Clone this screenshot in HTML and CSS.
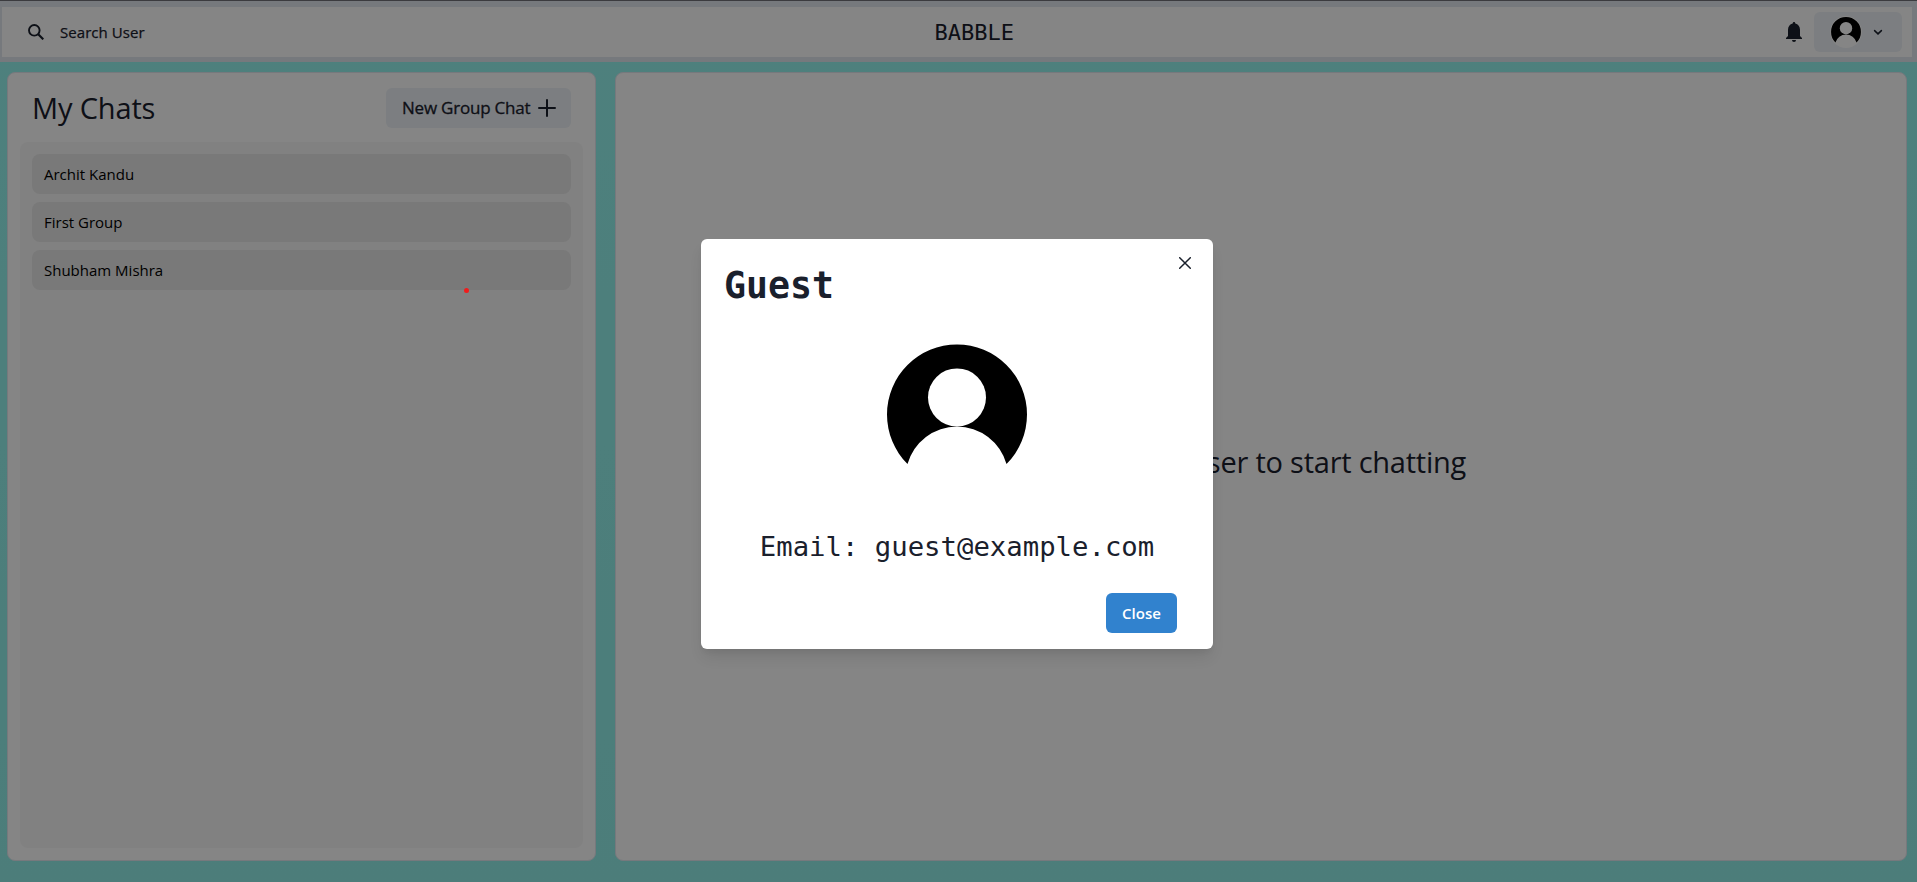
FILE: index.html
```html
<!DOCTYPE html>
<html lang="en">
<head>
<meta charset="utf-8">
<title>Babble</title>
<link rel="stylesheet" href="styles.css">
</head>
<body>
<svg width="0" height="0" class="defs" aria-hidden="true">
  <symbol id="avatar" viewBox="0 0 150 150">
    <rect width="150" height="150" fill="#fff"/>
    <path fill="#000" d="M25.5 124A70 70 0 1 1 124.5 124A51.4 51.4 0 0 0 25.5 124Z"/>
    <circle cx="75" cy="57.4" r="29" fill="#fff"/>
  </symbol>
</svg>
<div class="app">
  <header class="header">
    <button class="search">
      <svg width="16" height="16" viewBox="0 0 16 16" fill="none" stroke="currentColor" stroke-width="1.9"><circle cx="6.3" cy="6.3" r="5.3"/><path d="M10.2 10.2L15.3 15.3" stroke-width="2.2"/></svg>
      <span>Search User</span>
    </button>
    <h1 class="brand">BABBLE</h1>
    <div class="actions">
      <svg class="bell" width="16" height="20" viewBox="0 0 16 20" fill="currentColor"><path d="M8 0C7.1 0 6.7.6 6.7 1.5C3.8 2.2 2 4.6 2 7.7V14L0 16V17H16V16L14 14V7.7C14 4.6 12.200 2.200 9.300 1.500C9.300.6 8.900 0 8 0ZM6 18A2 2 0 0 0 10 18Z"/></svg>
      <button class="profile">
        <svg class="profile-pic" width="32" height="32"><use href="#avatar"/></svg>
        <svg width="16" height="16" viewBox="0 0 16 16" fill="none" stroke="currentColor" stroke-width="1.5" stroke-linecap="round"><path d="M4.600 6.600L8 9.900L11.400 6.600"/></svg>
      </button>
    </div>
  </header>
  <main class="main">
    <section class="panel chats">
      <div class="chats-head">
        <h2 class="chats-title">My Chats</h2>
        <button class="new-group"><span>New Group Chat</span>
          <svg width="18" height="18" viewBox="0 0 18 18" fill="none" stroke="currentColor" stroke-width="2" stroke-linecap="round"><path d="M9 1V17M1 9H17"/></svg>
        </button>
      </div>
      <div class="chat-list">
        <div class="chat"><span>Archit Kandu</span></div>
        <div class="chat"><span>First Group</span></div>
        <div class="chat"><span>Shubham Mishra</span></div>
      </div>
    </section>
    <section class="panel room"><p class="hint">Click on a user to start chatting</p></section>
  </main>
</div>
<div class="overlay">
  <span class="marker"></span>
  <div class="modal" role="dialog">
    <button class="dismiss" aria-label="Close"><svg width="12" height="12" viewBox="0 0 12 12" fill="none" stroke="currentColor" stroke-width="1.500" stroke-linecap="round"><path d="M.7.7L11.300 11.300M11.300.7L.7 11.300"/></svg></button>
    <h2 class="modal-title">Guest</h2>
    <div class="modal-body">
      <svg width="150" height="150"><use href="#avatar"/></svg>
      <p class="email">Email: guest@example.com</p>
    </div>
    <div class="modal-foot"><button class="close"><span>Close</span></button></div>
  </div>
</div>
</body>
</html>
```
FILE: styles.css
```css
* { box-sizing: border-box; margin: 0; padding: 0; }
html, body { height: 100%; overflow: hidden; }
body { font-family: "Open Sans", "Noto Sans", sans-serif; font-size: 16px; color: #1a202c; }
button { border: 0; background: none; font: inherit; color: inherit; }
h1, h2 { font-weight: 400; }
span { white-space: nowrap; }
svg { display: block; flex: none; }
.defs { position: absolute; }

.app { height: 882px; display: flex; flex-direction: column; background: linear-gradient(#96f6f0, #92f0ea); border-top: 1px solid #72727a; }
.header { height: 61px; flex: none; display: flex; justify-content: space-between; align-items: center; background: #fff; border: 5px solid #e2e8f0; border-left-width: 2px; border-top-width: 6px; padding: 0 10px 0 10px; }
.search { display: flex; align-items: center; gap: 16px; height: 40px; padding: 0 18px 0 16px; }
.search span { font-size: 15px; letter-spacing: .06px; -webkit-text-stroke: .25px currentColor; }
.brand { font: 22px/33px "DejaVu Sans Mono", monospace; }
.actions { display: flex; align-items: center; gap: 12px; }
.profile { width: 88px; height: 40px; display: flex; align-items: center; gap: 8px; padding: 0 16px; border-radius: 6px; background: #edf2f7; }
.profile-pic { border-radius: 50%; }

.main { flex: 1; display: flex; justify-content: space-between; padding: 10px 10px 21px 7px; }
.panel { background: #fff; border: 1px solid #e2e8f0; border-radius: 8px; }
.chats { width: 589px; display: flex; flex-direction: column; padding: 12px; }
.chats-head { height: 57px; flex: none; display: flex; align-items: flex-start; justify-content: space-between; padding: 3px 12px 0; }
.chats-title { font-size: 29px; line-height: 40px; letter-spacing: -.15px; }
.new-group { width: 185px; height: 40px; display: flex; align-items: center; justify-content: space-between; padding: 0 15px 0 16px; border-radius: 6px; background: #edf2f7; font-size: 17px; }
.new-group span { padding-bottom: 2px; letter-spacing: -.22px; -webkit-text-stroke: .3px currentColor; }
.chat-list { flex: 1; display: flex; flex-direction: column; gap: 8px; padding: 12px; border-radius: 8px; background: #f8f8f8; }
.chat { height: 40px; display: flex; align-items: center; padding: 0 12px; border-radius: 8px; background: #e8e8e8; color: #000; font-size: 15px; }
.room { width: 1292px; display: flex; align-items: center; justify-content: center; }
.hint { font-size: 29px; line-height: 45px; letter-spacing: -.23px; padding-bottom: 10px; }

.overlay { position: absolute; inset: 0; display: flex; justify-content: center; align-items: flex-start; padding: 239px 3px 0 0; background: rgba(0, 0, 0, .48); }
.marker { position: absolute; left: 463.500px; top: 287.500px; width: 5px; height: 5px; border-radius: 50%; background: #f01c1c; }
.modal { position: relative; width: 512px; height: 410px; display: flex; flex-direction: column; background: #fff; border-radius: 6px; box-shadow: 0 10px 15px -3px rgba(0, 0, 0, .1), 0 4px 6px -2px rgba(0, 0, 0, .05); }
.dismiss { position: absolute; top: 8px; right: 12px; width: 32px; height: 32px; display: flex; align-items: center; justify-content: center; }
.modal-title { padding: 17px 23px 15px; font: 700 36.500px/60px "DejaVu Sans Mono", monospace; }
.modal-body { flex: 1; display: flex; flex-direction: column; align-items: center; justify-content: space-between; padding: 9px 24px 8px; }
.email { font: 27.300px/45px "DejaVu Sans Mono", monospace; white-space: nowrap; }
.modal-foot { display: flex; justify-content: flex-end; padding: 16px 36px; }
.close { width: 71px; height: 40px; border-radius: 6px; background: #3182ce; color: #fff; font-size: 15px; font-weight: 600; }
```
